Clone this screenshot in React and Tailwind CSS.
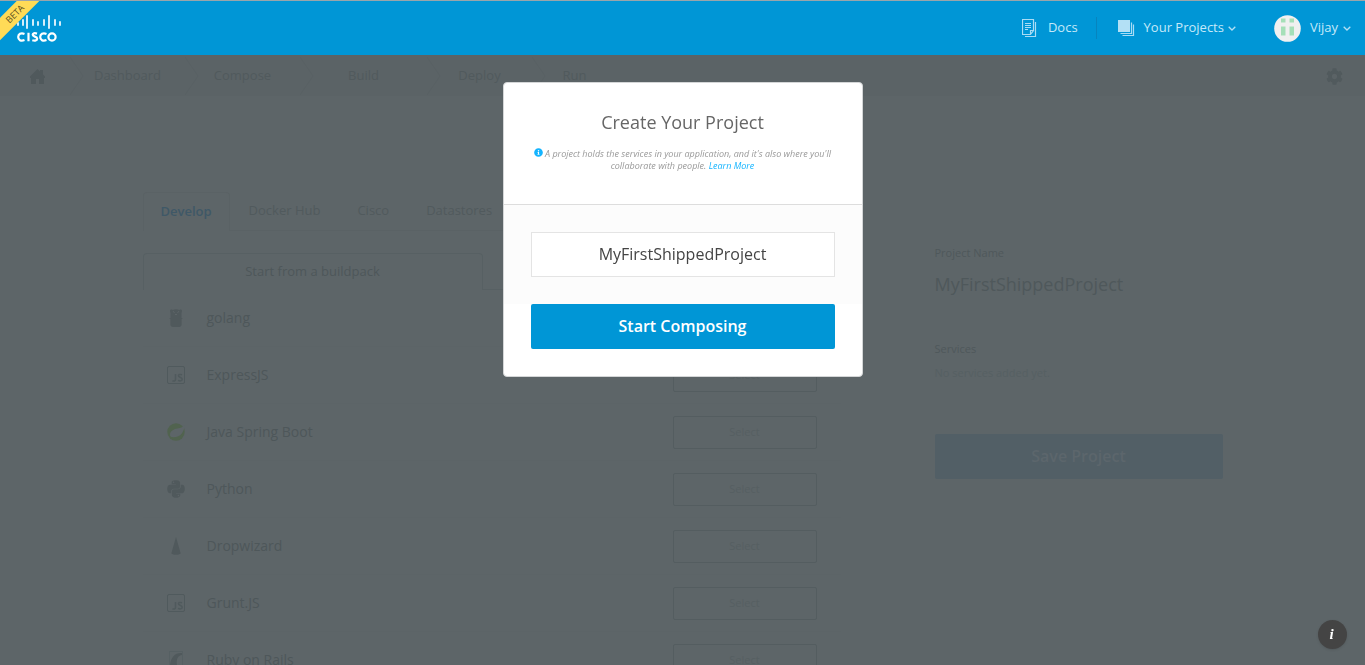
import { FaCog, FaPython, FaInfoCircle } from "react-icons/fa";

function CiscoLogo() {
  const bars = [
    [0, 7, 4], [5, 4, 7], [9, 0, 14], [15, 4, 7], [20, 6, 5],
    [26, 4, 7], [31, 0, 14], [37, 4, 7], [42, 6, 5],
  ];
  return (
    <span className="flex flex-col items-start gap-[3px] text-white">
      <svg width="44" height="14" viewBox="0 0 44 14" aria-hidden="true">
        {bars.map(([x, y, h]) => (
          <rect key={x} x={x} y={y} width="2" height={h} rx="1" fill="#d3edfa" />
        ))}
      </svg>
      <svg width="40" height="10" viewBox="0 0 40 10" fill="none" stroke="#ffffff" strokeWidth="2.200" role="img" aria-label="Cisco">
        <path d="M7.500 1.900C3.800.4 1.200 2.200 1.200 5s2.600 4.600 6.300 3.100M11.500.7v8.600M20 1.600c-2.600-.8-4.300-.3-4.300 1.200 0 2.100 4.500 1.500 4.500 3.900 0 1.800-2.300 2.300-4.900 1.500M29.500 1.900C25.800.4 23.200 2.200 23.200 5s2.600 4.600 6.300 3.100" />
        <circle cx="35" cy="5" r="3.600" />
      </svg>
    </span>
  );
}

function DocsIcon() {
  return (
    <svg width="15" height="19" viewBox="0 0 15 19" fill="none" stroke="#a9dcf5" aria-hidden="true">
      <path d="M.5.5h11v11l-3 4h-8zM8.500 15v-3.500h3M13.500 3v14.500H3M3 4.500h6M3 6.500h6M3 8.500h6M3 10.500h3" strokeWidth="1.200" />
    </svg>
  );
}

function ProjectsIcon() {
  return (
    <svg width="17" height="17" viewBox="0 0 17 17" aria-hidden="true">
      <rect width="12" height="12" fill="#b3e0f5" />
      <path d="M13.500 2.500v11h-11M15.500 4.500v11h-11" fill="none" stroke="#a9dcf5" strokeWidth="1.200" />
    </svg>
  );
}

function Caret() {
  return (
    <svg width="8" height="5" viewBox="0 0 8 5" fill="none" stroke="#b3e0f5" strokeWidth="1.300" aria-hidden="true">
      <path d="M.7.7 4 4 7.300.7" />
    </svg>
  );
}

function Avatar() {
  return (
    <svg width="27" height="27" viewBox="0 0 27 27" aria-hidden="true">
      <circle cx="13.500" cy="13.500" r="13.300" fill="#f0f0f0" />
      <path d="M7 3.500h4.500v4H7zM15.500 3.500H20v4h-4.500zM7 11.500h4.500v9H7zM15.500 11.500H20v9h-4.500z" fill="#a5dfb8" />
    </svg>
  );
}

function HomeIcon() {
  return (
    <svg width="15" height="15" viewBox="0 0 15 15" fill="#50595c" aria-hidden="true">
      <path d="M7.500 0 10 2.500V1h3v4.500L15 7.500V9h-1v6H9v-5H6v5H1V9H0V7.500z" />
    </svg>
  );
}

function Gopher() {
  return (
    <svg width="14" height="18" viewBox="0 0 14 18" aria-hidden="true">
      <path d="M1 2C1 .5 3 .3 3.500 1 5.500 0 8.500 0 10.500 1c.5-.7 2.500-.5 2.500 1l-.5 2v5H14l-1.400 1v5.500c0 1.500-1 2.200-2.600 2.500H4c-1.600-.3-2.600-1-2.600-2.500V10L0 9h1.500V4z" fill="#50595c" />
      <path d="M4 2l1.500 2M10 2 8.500 4M6 5.500h2" stroke="#5d6568" />
    </svg>
  );
}

function JsIcon() {
  return (
    <svg width="18" height="18" viewBox="0 0 18 18" fill="none" stroke="#505a5d" aria-hidden="true">
      <rect x=".5" y=".5" width="17" height="17" rx="1.500" />
      <path d="M8.500 8v5.500c0 1.500-1.500 2-3 1.300M15 8.800c-2-.8-3.600-.3-3.600.9 0 1.700 3.800 1.300 3.800 3.600 0 1.600-2.200 2-4.200 1.100" strokeWidth="1.500" />
    </svg>
  );
}

function SpringIcon() {
  return (
    <svg width="18" height="18" viewBox="0 0 18 18" aria-hidden="true">
      <circle cx="9" cy="9" r="8.700" fill="#51634f" />
      <path d="M17.500 1.500C16 4.500 13.500 5 10.500 5.400 6 6 3 8.500 3 11.500c0 1.400.7 2.300 1.500 2.600 4.500.4 8.500-.8 10.500-3.800 1.600-2.400 2.700-5.500 2.500-8.800z" fill="#5d6568" />
    </svg>
  );
}

function WizardHat() {
  return (
    <svg width="10" height="18" viewBox="0 0 10 18" fill="#50595c" aria-hidden="true">
      <path d="M5 0 9.700 16.500C7.500 18.300 2.500 18.300.3 16.500z" />
    </svg>
  );
}

function RailsIcon() {
  return (
    <svg width="14" height="18" viewBox="0 0 14 18" aria-hidden="true">
      <rect x=".5" y=".5" width="13" height="17" fill="none" stroke="#566063" />
      <path d="M1 14C2 6 6 1.500 13 2v2C9 4.500 7 8 8 14z" fill="#50595c" />
    </svg>
  );
}

const steps = [
  { name: "Dashboard", width: "w-[115px]" },
  { name: "Compose", width: "w-[115px]" },
  { name: "Build", width: "w-[127px]" },
  { name: "Deploy", width: "w-[105px]" },
  { name: "Run", width: "w-[85px]" },
];

const buildpacks = [
  { name: "golang", icon: <Gopher /> },
  { name: "ExpressJS", icon: <JsIcon /> },
  { name: "Java Spring Boot", icon: <SpringIcon /> },
  { name: "Python", icon: <FaPython size={20} color="#50595c" /> },
  { name: "Dropwizard", icon: <WizardHat /> },
  { name: "Grunt.JS", icon: <JsIcon /> },
  { name: "Ruby on Rails", icon: <RailsIcon /> },
];

function Header() {
  return (
    <header className="relative flex h-[55px] shrink-0 items-center justify-between overflow-hidden border-t border-[#9aa5aa] bg-[#0096d6] pr-3.5 pl-[17px]">
      <a href="#home"><CiscoLogo /></a>
      <span className="absolute top-[5px] -left-[35px] w-[100px] -rotate-45 bg-[#ffdb57] text-center text-[9px] leading-[16px] text-[#5a4d1e]">
        BETA
      </span>
      <nav className="flex items-center text-[13px] text-[#c5e9f9]">
        <a href="#docs" className="flex h-[22px] items-center gap-[11px] border-r border-[#0784be] pr-[18px]">
          <DocsIcon />
          Docs
        </a>
        <button type="button" className="ml-[21px] flex items-center gap-[9px]">
          <ProjectsIcon />
          <span className="flex items-center gap-1">Your Projects <Caret /></span>
        </button>
        <button type="button" className="ml-[38px] flex items-center gap-[9px]">
          <Avatar />
          <span className="flex items-center gap-[5px]">Vijay <Caret /></span>
        </button>
      </nav>
    </header>
  );
}

function StepBar() {
  return (
    <nav className="flex h-[41px] shrink-0 items-center justify-between border-b border-[#5b6366] bg-[#5b6366] pt-[2px] pr-[22px] pl-[30px] text-[#515a5d]">
      <div className="flex items-center">
        <a href="#home" aria-label="Home" className="w-10"><HomeIcon /></a>
        {steps.map((step) => (
          <a key={step.name} href="#step" className={`relative text-center text-[13px] font-medium text-[#515a5d] ${step.width}`}>
            <svg className="absolute -top-[9px] left-0" width="14" height="38" viewBox="0 0 14 38" fill="none" stroke="#596164" aria-hidden="true">
              <path d="M0 0 13 19 0 38" />
            </svg>
            {step.name}
          </a>
        ))}
      </div>
      <button type="button" aria-label="Settings"><FaCog size={17} /></button>
    </nav>
  );
}

function Catalog() {
  return (
    <section className="w-[698px]">
      <div className="flex gap-px border-b border-[#5a6265] text-[13px] font-medium text-[#515a5d]">
        <button type="button" className="-mb-px h-[39px] rounded-t border border-b-0 border-[#5a6265] bg-[#5d6568] px-[17px] font-semibold text-[#3f5867]">Develop</button>
        <button type="button" className="px-[18px]">Docker Hub</button>
        <button type="button" className="px-[18px]">Cisco</button>
        <button type="button" className="px-[18px]">Datastores</button>
      </div>
      <div className="mt-[22px] flex h-[37px] text-[13px] text-[#4e575a]">
        <button type="button" className="w-[340px] rounded-t border border-b-0 border-[#576063]">Start from a buildpack</button>
        <div className="grow border-b border-[#576063]" />
      </div>
      <ul>
        {buildpacks.map((pack) => (
          <li key={pack.name} className="flex h-[57px] items-center border-b border-[#5c6467] pr-6 pl-[23px]">
            <span className="flex w-5 justify-center">{pack.icon}</span>
            <span className="ml-[21px] grow pb-[2px] text-[14px] text-[#4e575a]">{pack.name}</span>
            <button type="button" className="h-[33px] w-[144px] rounded-xs border border-[#545d60] text-[11px] text-[#565f62]">Select</button>
          </li>
        ))}
      </ul>
    </section>
  );
}

function Summary() {
  return (
    <aside className="w-[288px] pt-[53px] text-[11px] leading-4 text-[#4f585b]">
      <h2>Project Name</h2>
      <p className="mt-[11px] mb-[45px] text-[18px] leading-6">MyFirstShippedProject</p>
      <h2>Services</h2>
      <p className="mt-2 text-[#566063]">No services added yet.</p>
      <button type="button" className="mt-[53px] h-[45px] w-full rounded-xs bg-[#525f66] pb-[2px] text-[16px] font-semibold text-[#5c666c]">Save Project</button>
    </aside>
  );
}

function CreateProjectDialog() {
  return (
    <div className="fixed inset-x-0 top-[82px] flex justify-center">
      <form role="dialog" aria-labelledby="dialog-title" className="w-[360px] overflow-hidden rounded border border-[#d4d6d7] bg-white text-center" onSubmit={(event) => event.preventDefault()}>
        <div className="h-[122px] border-b border-[#dddddd] px-[27px] pt-[27px]">
          <h1 id="dialog-title" className="text-[18px] leading-6 text-[#666666]">Create Your Project</h1>
          <p className="mt-[14px] text-[9px] leading-3 text-[#999999] italic">
            <FaInfoCircle size={9} className="mr-[2px] inline align-[0px] text-[#14b4ff]" />
            A project holds the services in your application, and it's also where you'll collaborate with people.{" "}
            <a href="#learn-more" className="text-[#14b4ff]">Learn More</a>
          </p>
        </div>
        <div className="bg-[#fcfcfc] px-[27px] py-[27px]">
          <input type="text" aria-label="Project name" defaultValue="MyFirstShippedProject" className="h-[45px] w-full border border-[#e4e4e4] bg-white pb-[2px] text-center text-[16px] text-[#444444] outline-none" />
        </div>
        <div className="px-[27px] pb-[27px]">
          <button type="submit" className="h-[45px] w-full rounded-xs bg-[#0096d6] pb-[2px] text-[16px] font-semibold text-white">Start Composing</button>
        </div>
      </form>
    </div>
  );
}

export default function App() {
  return (
    <div className="flex h-screen flex-col overflow-hidden bg-[#5d6568] font-['Open_Sans',sans-serif]">
      <Header />
      <StepBar />
      <main className="mx-auto flex w-full max-w-[1080px] justify-between pt-24">
        <Catalog />
        <Summary />
      </main>
      <CreateProjectDialog />
      <button type="button" aria-label="Information" className="fixed right-[18px] bottom-4 size-[29px] rounded-full bg-[#444444] pr-[2px] font-['Liberation_Serif',serif] text-[15px] font-bold text-white italic shadow">
        i
      </button>
    </div>
  );
}
